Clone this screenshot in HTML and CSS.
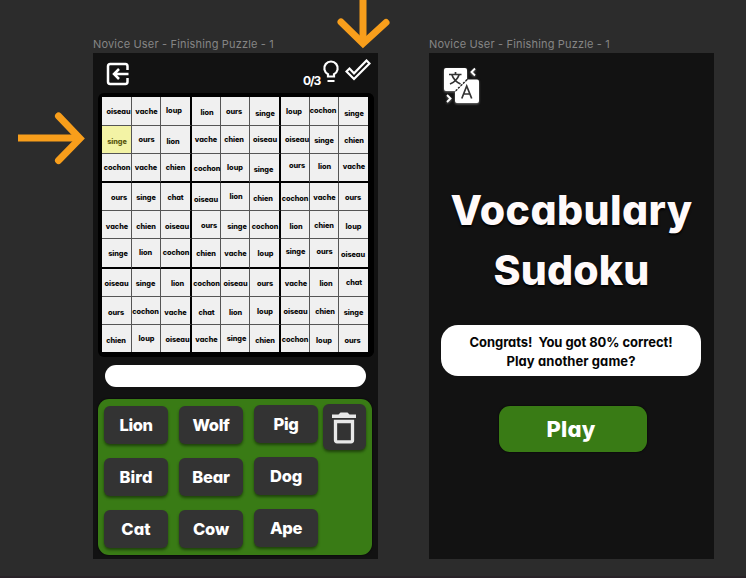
FILE: index.html
```html
<!DOCTYPE html>
<html lang="en">
<head>
<meta charset="utf-8">
<title>Vocabulary Sudoku</title>
<link rel="stylesheet" href="styles.css">
</head>
<body>
<main class="canvas">
  <section class="frame">
    <h2 class="frame-label" data-width="181">Novice User - Finishing Puzzle - 1</h2>
    <div class="screen game">
      <header class="toolbar">
        <svg class="exit" viewBox="0 0 24 24" width="24" height="24"><path d="M21.500 8V4.200Q21.500 2 19.500 2H4.200Q2 2 2 4.200V19.800Q2 22 4.200 22H19.500Q21.500 22 21.500 19.800V16M22.500 12H8M13 7L8 12L13 17" fill="none" stroke="#fff" stroke-width="2.500"/></svg>
        <span class="hints" data-width="17">0/3</span>
        <svg class="bulb" viewBox="0 0 18 24" width="18" height="24"><path d="M6 16.500V14.200A6.700 6.700 0 1 1 12 14.200V16.500ZM5.500 21H12.500" fill="none" stroke="#fff" stroke-width="2.200"/></svg>
        <svg class="check" viewBox="0 0 26 22" width="26" height="22"><path d="M1.500 12.500L4.500 9.500L9 14.300L21.500 1.500L24.500 4.500L9 20Z" fill="none" stroke="#fff" stroke-width="2.200"/></svg>
      </header>
      <div class="board" id="board"></div>
      <div class="answer"></div>
      <div class="keypad">
        <div class="keys">
          <button><span data-width="33">Lion</span></button><button><span data-width="37">Wolf</span></button><button class="raised"><span data-width="25">Pig</span></button>
          <button><span data-width="33">Bird</span></button><button><span data-width="37.500">Bear</span></button><button class="raised"><span data-width="32">Dog</span></button>
          <button><span data-width="29.500">Cat</span></button><button><span data-width="36">Cow</span></button><button class="raised"><span data-width="32">Ape</span></button>
        </div>
        <button class="trash"><svg viewBox="0 0 24 32" width="24" height="32"><path d="M0 2.500H6.500L8.500 .5H15.500L17.500 2.500H24V6H0Z" fill="#e8e8e8"/><path d="M3.500 9.500H20.500V28.300Q20.500 29.800 19 29.800H5Q3.500 29.800 3.500 28.300Z" fill="none" stroke="#e8e8e8" stroke-width="3.300"/></svg></button>
      </div>
    </div>
  </section>
  <section class="frame">
    <h2 class="frame-label" data-width="181">Novice User - Finishing Puzzle - 1</h2>
    <div class="screen result">
      <svg class="translate" viewBox="0 0 40 40" width="40" height="40">
        <path d="M3 1H22Q24 1 24 3V12.500L12.500 24H3Q1 24 1 22V3Q1 1 3 1ZM25 12.500H34Q36 12.500 36 14.500V34Q36 36 34 36H14Q12 36 12 34V25Z" fill="#fff"/>
        <path d="M24 12.500L12 24.500" stroke="#222" stroke-width="1.400" stroke-dasharray="2 1.500"/>
        <path d="M6 7.500H18.500M12.500 5V7.500M9 8Q11 14 17.500 17M16 8Q14 14 7 17M18.800 31.500L23.700 19L28.700 31.500M20.700 27H27" fill="none" stroke="#333" stroke-width="1.700"/>
        <path d="M32 1.500L28.500 5L32 8.500M4 28L7.500 31.500L4 35" fill="none" stroke="#fff" stroke-width="1.900"/>
      </svg>
      <h1><span data-width="242">Vocabulary</span><span data-width="156">Sudoku</span></h1>
      <div class="message"><span data-width="203">Congrats!&nbsp; You got 80% correct!</span><span data-width="129">Play another game?</span></div>
      <button class="play"><span data-width="49">Play</span></button>
    </div>
  </section>
  <svg class="arrows" viewBox="0 0 400 180" width="400" height="180"><g fill="none" stroke="#f89e1b" stroke-width="7"><path d="M18 138H80"/><path d="M363 0V43"/><g stroke-linecap="round"><path d="M58.500 116L80 138.500L58.500 160.500" /><path d="M341 22L363 43.500L386 22.500"/></g></g></svg>
</main>
<script src="app.js"></script>
</body>
</html>
```
FILE: styles.css
```css
* { box-sizing: border-box; }
body { margin: 0; background: #2c2c2c; color: #fff; font-family: Inter, "Liberation Sans", sans-serif; font-feature-settings: "cv11"; }
button { border: 0; padding: 0; color: inherit; font: inherit; font-feature-settings: inherit; }
span { white-space: nowrap; }
.canvas { position: relative; display: flex; gap: 51px; height: 578px; padding: 36px 0 0 93px; overflow: hidden; border-bottom: 2px solid #292328; }
.frame { width: 285px; }
.frame-label { display: table; margin: 0; height: 17px; font-size: 11px; line-height: 17px; font-weight: 400; color: #858585; white-space: nowrap; font-feature-settings: normal; }
.screen { height: 506px; background: #121212; }
.game { padding: 0 4px; }
.toolbar { display: flex; align-items: flex-start; height: 40px; padding: 9px 1px 0 9px; }
.hints { margin: 11px 0 0 173px; font-size: 12px; line-height: 16px; font-weight: 700; }
.bulb { margin: -2px 0 0 2px; }
.check { margin: -3px 0 0 5px; }
.board { display: grid; width: 276px; height: 264px; margin-left: 1px; padding: 4px; border: solid #000; border-width: 0 1px 0 0; background: #000; border-radius: 6px;
  grid-template-columns: 30px 29px 31px 29px 29px 31px 29px 29px 29px;
  grid-template-rows: 29px 28px 29px 28px 28px 30px 28px 28px 27px; }
.cell { display: flex; align-items: center; justify-content: center; min-width: 0; background: #f0f0f0; border: solid #555; border-width: 0 1px 1px 0; color: #080808; font-size: 7.300px; line-height: 10px; font-weight: 800; }
.cell:nth-child(9n+3), .cell:nth-child(9n+6) { border-right: 2px solid #000; }
.cell:nth-child(9n) { border-right: 0; }
.cell.block-end { border-bottom: 2px solid #000; }
.cell.last-row { border-bottom: 0; }
.cell.selected { background: #f3f3a5; color: #5c5a10; }
.answer { width: 261px; height: 22px; margin: 8px 0 0 8px; border-radius: 11px; background: #fff; }
.keypad { display: flex; justify-content: space-between; width: 274px; height: 156px; margin: 12px 0 0 1px; padding: 5px 6px 0 6px; background: #397b15; border-radius: 11px; box-shadow: 0 0 2px #000; }
.keys { display: grid; grid-template-columns: repeat(3, 64px); grid-template-rows: repeat(3, 38px); gap: 14px 11px; padding-top: 2px; }
.keys button { height: 38px; border-radius: 6px; background: #333; box-shadow: 0 2px 3px #0007; font-size: 16.500px; line-height: 37px; font-weight: 800; }
.keys .raised { margin-top: -1px; }
.trash { width: 43px; height: 46px; padding: 6px 2px 0 0; border-radius: 6px; background: #333; box-shadow: 0 2px 3px #0007; }
.result { display: flex; flex-direction: column; align-items: center; }
.translate { align-self: flex-start; margin: 14px 0 0 14px; filter: drop-shadow(0 1px 1px #777); }
h1 { display: flex; flex-direction: column; align-items: center; margin: 73px 0 0 0; color: #fffafa; font-size: 41px; line-height: 60px; font-weight: 800; text-shadow: 0 2px 2px #000; }
.message { display: flex; flex-direction: column; align-items: center; width: 260px; height: 51px; margin: 25px 1px 0 0; padding-top: 8px; border-radius: 17px; background: #fff; color: #050505; font-size: 13px; line-height: 19px; font-weight: 700; }
.play { width: 148px; height: 46px; margin: 30px 0 0 2px; padding-right: 3px; border-radius: 11px; background: #397b15; font-size: 22px; line-height: 42px; font-weight: 800; box-shadow: 0 0 2px #000; }
.arrows { position: absolute; left: 0; top: 0; }
```
FILE: app.js
```js
// Each entry is word, horizontal centre, vertical centre on the canvas.
const rows = [
  "oiseau 118.5 112,vache 146.5 111.5,loup 174 111,lion 207 113,ours 234 111.5,singe 265 114,loup 294 111.5,cochon 323 111,singe 354 114",
  "singe 117 141,ours 146.5 139,lion 173 141,vache 206 139,chien 234 139.5,oiseau 265 139,oiseau 297 139,singe 324 140,chien 354 140",
  "cochon 117 167.5,vache 146 167.5,chien 175.5 167.5,cochon 207 168,loup 235 167.5,singe 263.5 169,ours 297 165,lion 324.5 166,vache 354 166",
  "ours 119 197,singe 146 197,chat 175.5 197,oiseau 206 199,lion 236 196,chien 263 198,cochon 295 198.5,vache 324.5 197,ours 353 197",
  "vache 117 226,chien 146 226,oiseau 177 226,ours 209 225,singe 237 226.5,cochon 265 226,lion 296 226,chien 324 225,loup 353.5 226",
  "singe 118 253.5,lion 145.5 253,cochon 176 253,chien 206 254,vache 235.5 254,loup 265.5 253.5,singe 295.5 252,ours 324.5 252,oiseau 353 255",
  "oiseau 116.5 283.5,singe 145.5 283.5,lion 177.5 283.5,cochon 206.5 283,oiseau 235.5 283.5,ours 265 283.5,vache 296 283.5,lion 326 283.5,chat 354 282.5",
  "ours 116 312,cochon 145.5 311.5,vache 175.5 312,chat 206.5 312,lion 235.5 312.5,loup 265 311.5,oiseau 295.5 311,chien 325 311.5,singe 353.5 312",
  "chien 116 340.5,loup 146.5 338.5,oiseau 177.5 339,vache 206.5 339,singe 236.5 338.5,chien 265 340.5,cochon 295 339.5,loup 324 340,ours 352.5 340"
];
const widths = { oiseau: 24, cochon: 26.5, vache: 22.5, singe: 19.5, chien: 19.5, loup: 16, lion: 13, ours: 16, chat: 16 };
const board = document.getElementById("board");
const words = [];
rows.forEach((row, r) => row.split(",").forEach((entry, c) => {
  const [word, x, y] = entry.split(" ");
  const cell = document.createElement("div");
  cell.className = "cell";
  if (r === 2 || r === 5) cell.classList.add("block-end");
  if (r === 8) cell.classList.add("last-row");
  if (r === 1 && c === 0) cell.classList.add("selected");
  const text = document.createElement("span");
  text.textContent = word;
  text.dataset.width = widths[word];
  cell.append(text);
  board.append(cell);
  words.push([text, +x, +y]);
}));

// Tracks each label so that it fills its designed width.
document.querySelectorAll("[data-width]").forEach(el => {
  const gap = el.dataset.width - el.getBoundingClientRect().width;
  el.style.letterSpacing = gap / el.textContent.length + "px";
});

words.forEach(([text, x, y]) => {
  const box = text.getBoundingClientRect();
  text.style.transform = `translate(${x - box.left - box.width / 2}px, ${y - box.top - box.height / 2}px)`;
});
```
